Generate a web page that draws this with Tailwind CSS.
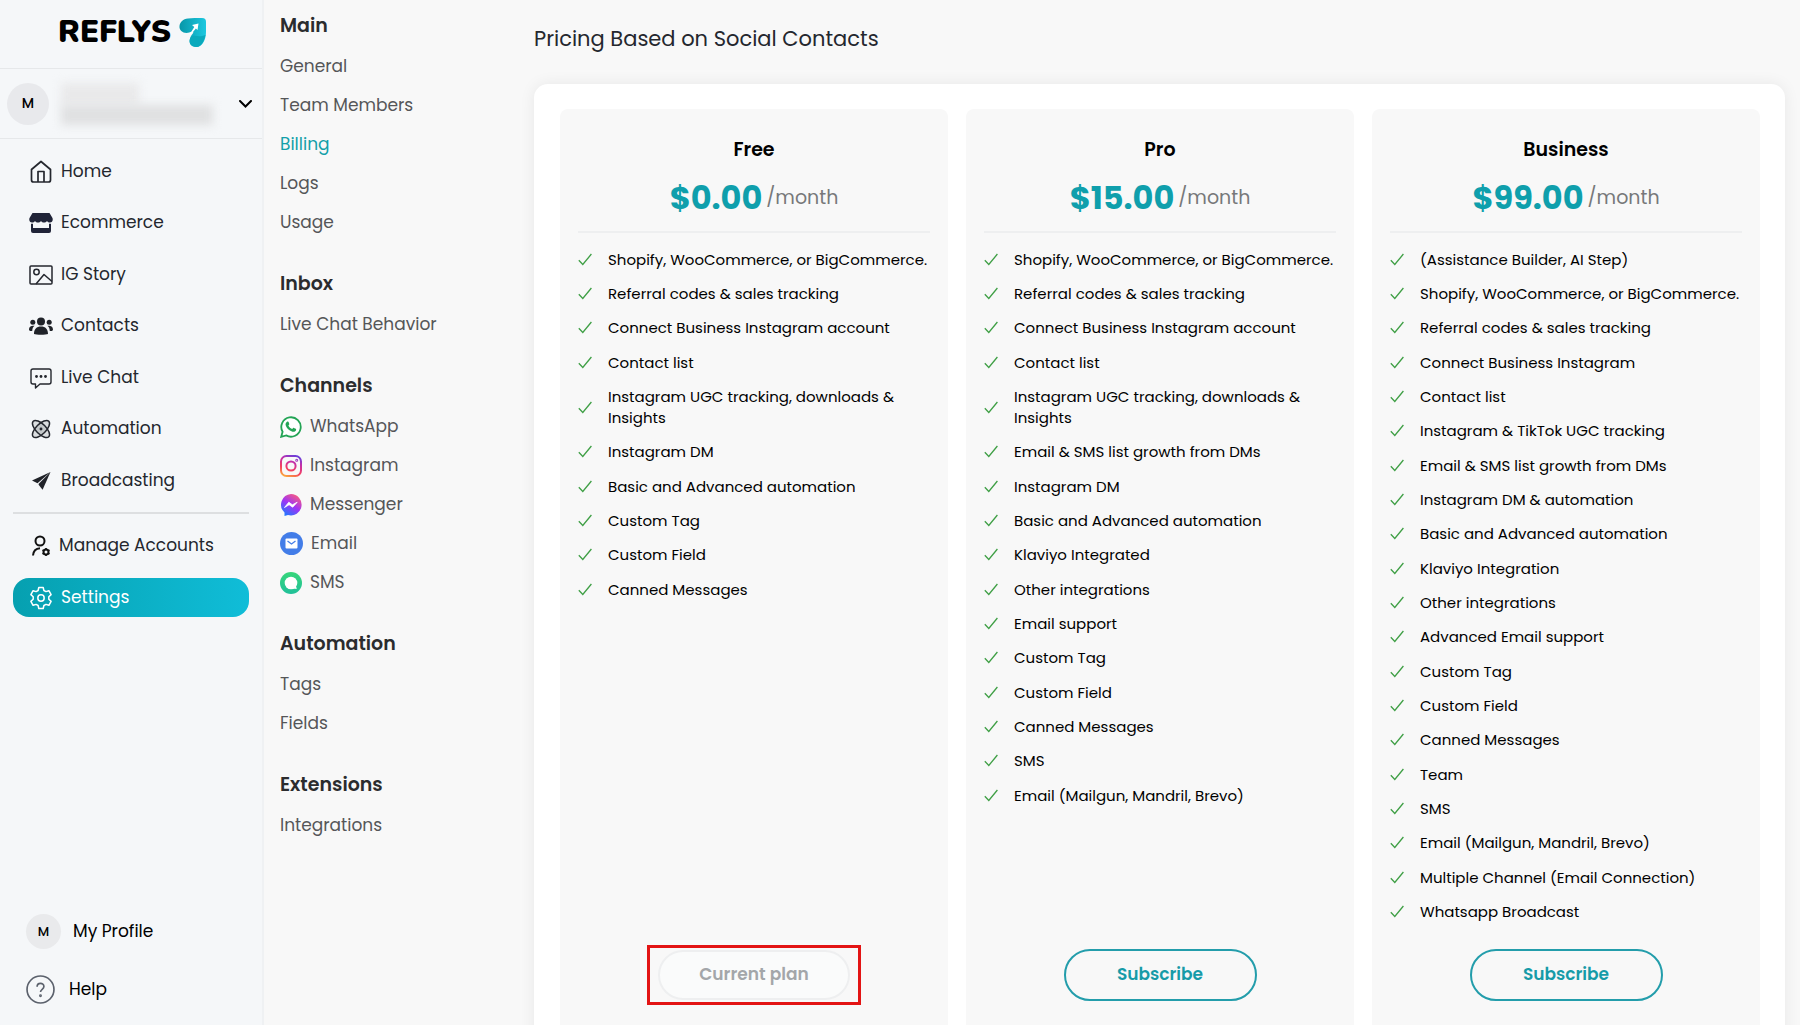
<!DOCTYPE html>
<html lang="en">
<head>
    <meta charset="UTF-8">
    <meta name="viewport" content="width=device-width, initial-scale=1.0">
    <title>Reflys - Billing</title>
    <script src="https://cdn.jsdelivr.net/npm/@tailwindcss/browser@4"></script>
</head>
<body class="bg-[#f8f8f8] font-[Poppins,Inter,sans-serif] text-[#24272e]">
    <!-- Shared icons -->
    <svg class="hidden">
        <symbol id="check" viewBox="0 0 14 13">
            <path d="M.8 7.2l4 4.3L13.4 1" fill="none" stroke="#3f9f45" stroke-width="1.3"/>
        </symbol>
    </svg>

    <div class="flex h-screen overflow-hidden">
        <!-- Sidebar -->
        <aside class="flex w-[264px] shrink-0 flex-col border-r-2 border-[#eff1f3] bg-[#f5f7f9]">
            <a href="#" class="flex h-[69px] items-center gap-2 border-b border-[#e6e8ea] pb-1 pl-[58px]">
                <span class="font-[Nunito,Lato,sans-serif] text-[31px] leading-8 font-black text-black">REFLYS</span>
                <svg class="h-[29px] w-[27px]" viewBox="0 0 27 29">
                    <defs>
                        <linearGradient id="wing" x1="0" y1="0" x2="1" y2="0">
                            <stop offset="0" stop-color="#0796a8"/>
                            <stop offset="1" stop-color="#1cc8e0"/>
                        </linearGradient>
                    </defs>
                    <path d="M9 .500C13 0 18 0 23 0c3 0 4 1.500 4 4v10c0 8-4 15-9.500 15-5 0-8-4-6.500-8.500.8-2.500 2-4 3.500-6-2.500-2-4 .500-7 .500C3.500 15 0 12 .500 8 1 4 4 1 9 .500z" fill="url(#wing)"/>
                    <path d="M12 19c3-3 7 1 14.500-2-1.500 7-4.500 12-9 12-6 0-9-5-5.500-10z" fill="#0aa9bc"/>
                    <path d="M13 7l6.500-1.500L18.500 12l-1.600-1.600L11.500 17l-.8-.7 4.600-7.300z" fill="#fff"/>
                </svg>
            </a>

            <button type="button" aria-label="Switch account" class="flex h-[70px] w-full items-center border-b border-[#e6e8ea] pr-[10px] pl-[7px]">
                <span class="flex size-[42px] items-center justify-center rounded-full bg-[#e8e9ec] text-[14px] font-medium text-black">M</span>
                <span class="ml-3 flex-1">
                    <span class="block h-[22px] w-[78px] bg-[#e9e9ea] blur-[5px]"></span>
                    <span class="block h-[20px] w-[152px] bg-[#dfe0e1] blur-[5px]"></span>
                </span>
                <svg class="h-[8px] w-[13px]" viewBox="0 0 13 8" fill="none" stroke="#000" stroke-width="2" stroke-linecap="round"><path d="M1 1l5.500 5.500L12 1"/></svg>
            </button>

            <nav class="flex flex-1 flex-col px-[13px] pt-[13px]">
                <ul class="flex h-[348px] flex-col justify-between text-[17px]">
                    <li><a href="#" class="flex h-[39px] items-center gap-2 pl-4">
                        <svg class="size-6" viewBox="0 0 24 24" fill="none" stroke="#24272e" stroke-width="1.7" stroke-linejoin="round"><path d="M2.500 9.500L12 1.500l9.500 8V20a2 2 0 0 1-2 2h-15a2 2 0 0 1-2-2z"/><path d="M9 22V11.500h6V22"/></svg>
                        Home</a></li>
                    <li><a href="#" class="flex h-[39px] items-center gap-2 pl-4">
                        <svg class="size-6" viewBox="0 0 24 24" fill="#202438"><path d="M3.500 2h17L23.500 7c.8 2.500-.5 4.500-2.500 4.500-1.300 0-2.200-.5-3-1.500-1.500 2-4.500 2-6 0-1.500 2-4.500 2-6 0-.8 1-1.700 1.500-3 1.500C1 11.500-.300 9.500.500 7z"/><path d="M2 12.800h2V17h16v-4.200h2V20a2 2 0 0 1-2 2H4a2 2 0 0 1-2-2z"/></svg>
                        Ecommerce</a></li>
                    <li><a href="#" class="flex h-[39px] items-center gap-2 pl-4">
                        <svg class="size-6" viewBox="0 0 24 24" fill="none" stroke="#24272e" stroke-width="1.500" stroke-linejoin="round"><rect x="1" y="3" width="22" height="18" rx="1"/><circle cx="7.500" cy="9" r="2.700"/><path d="M7 21l8-9.500 8 7"/></svg>
                        IG Story</a></li>
                    <li><a href="#" class="flex h-[39px] items-center gap-2 pl-4">
                        <svg class="size-6" viewBox="0 0 24 24" fill="#202329"><circle cx="12" cy="7.500" r="4"/><circle cx="3.800" cy="8.300" r="2.500"/><circle cx="20.200" cy="8.300" r="2.500"/><path d="M5 20c0-5 2.500-7.500 7-7.500s7 2.500 7 7.500c-2 1-12 1-14 0zM0 16c0-3 1.600-4.300 5.500-4.200C4 13 3.400 14.500 3.200 17 1.500 17 .5 17 0 16zM24 16c0-3-1.600-4.300-5.500-4.200 1.500 1.200 2.100 2.700 2.300 5.200 1.700 0 2.700 0 3.200-1z"/></svg>
                        Contacts</a></li>
                    <li><a href="#" class="flex h-[39px] items-center gap-2 pl-4">
                        <svg class="size-6" viewBox="0 0 24 24" fill="none" stroke="#24272e" stroke-width="1.400" stroke-linejoin="round"><path d="M4 3h16a2 2 0 0 1 2 2v11a2 2 0 0 1-2 2h-9l-4.500 4v-4H4a2 2 0 0 1-2-2V5a2 2 0 0 1 2-2z"/><g fill="#24272e" stroke="none"><circle cx="7.500" cy="10.500" r="1.400"/><circle cx="12" cy="10.500" r="1.400"/><circle cx="16.500" cy="10.500" r="1.400"/></g></svg>
                        Live Chat</a></li>
                    <li><a href="#" class="flex h-[39px] items-center gap-2 pl-4">
                        <svg class="size-6" viewBox="0 0 24 24" fill="#24272e" fill-opacity=".12" stroke="#24272e" stroke-width="1.500"><ellipse cx="12" cy="12" rx="11" ry="5" transform="rotate(45 12 12)"/><ellipse cx="12" cy="12" rx="11" ry="5" transform="rotate(-45 12 12)"/><circle cx="12" cy="12" r=".7"/></svg>
                        Automation</a></li>
                    <li><a href="#" class="flex h-[39px] items-center gap-2 pl-4">
                        <svg class="size-6" viewBox="0 0 24 24" fill="#202329"><path d="M21.500 3L3 11.500l5.500 2.800z"/><path d="M21.500 3L9.500 15l.3 1 3.800 4.800z"/></svg>
                        Broadcasting</a></li>
                </ul>
                <hr class="my-3 border-t-2 border-[#dddfe1]">
                <ul class="flex flex-col gap-[13px] text-[17px]">
                    <li><a href="#" class="flex h-[39px] items-center gap-[6px] pl-4">
                        <svg class="size-6" viewBox="0 0 24 24" fill="none" stroke="#111" stroke-width="2"><circle cx="11" cy="7" r="4.500"/><path d="M4 21.500c.3-4 2.500-7 7-7.300"/><circle cx="17" cy="18" r="2.500"/><path stroke-width="1.700" d="M17 14v2M17 20v2M13.500 16l1.700 1M18.800 19l1.700 1M13.500 20l1.700-1M18.800 17l1.700-1"/></svg>
                        Manage Accounts</a></li>
                    <li><a href="#" class="flex h-[39px] items-center gap-2 rounded-[16px] bg-linear-to-r from-[#06a0b0] to-[#10bdd8] pl-4 text-white">
                        <svg class="size-6" viewBox="0 0 24 24" fill="none" stroke="#fff" stroke-width="1.500" stroke-linejoin="round"><circle cx="12" cy="12" r="3.200"/><path d="M9.800 1.500h4.400l.7 3 2 1.100 3-.9 2.200 3.900-2.300 2.100v2.600l2.300 2.100-2.200 3.900-3-.9-2 1.100-.7 3H9.800l-.7-3-2-1.100-3 .9-2.200-3.900 2.300-2.100v-2.600L1.900 8.600l2.200-3.900 3 .9 2-1.100z"/></svg>
                        Settings</a></li>
                </ul>
            </nav>

            <ul class="flex flex-col gap-[21px] pb-[17px] pl-[26px] text-[17px] text-black">
                <li><a href="#" class="flex h-[37px] items-center gap-3">
                    <span class="flex size-[35px] items-center justify-center rounded-full bg-[#e9eaec] text-[13px] font-medium">M</span>
                    My Profile</a></li>
                <li><a href="#" class="flex h-[37px] items-center gap-[14px]">
                    <svg class="size-[29px]" viewBox="0 0 28 28" fill="none" stroke="#5b616c" stroke-width="1.600"><circle cx="14" cy="14" r="13"/><path d="M10.700 11.300c0-4.300 6.600-4.300 6.600-.2 0 2.700-3.300 2.700-3.300 5.400"/><circle cx="14" cy="20" r=".6"/></svg>
                    Help</a></li>
            </ul>
        </aside>

        <!-- Settings menu -->
        <nav class="w-[270px] shrink-0 pt-[5px] pl-4 text-[17px] text-[#555658]">
            <section class="mb-[21px]">
                <h2 class="flex h-[42px] items-center text-[19px] font-semibold text-[#2b2c2e]">Main</h2>
                <a href="#" class="flex h-[39px] items-center">General</a>
                <a href="#" class="flex h-[39px] items-center">Team Members</a>
                <a href="#" class="flex h-[39px] items-center text-[#129fa9]">Billing</a>
                <a href="#" class="flex h-[39px] items-center">Logs</a>
                <a href="#" class="flex h-[39px] items-center">Usage</a>
            </section>
            <section class="mb-[21px]">
                <h2 class="flex h-[42px] items-center text-[19px] font-semibold text-[#2b2c2e]">Inbox</h2>
                <a href="#" class="flex h-[39px] items-center">Live Chat Behavior</a>
            </section>
            <section class="mb-[21px]">
                <h2 class="flex h-[42px] items-center text-[19px] font-semibold text-[#2b2c2e]">Channels</h2>
                <a href="#" class="flex h-[39px] items-center gap-2">
                    <svg class="size-[22px]" viewBox="0 0 22 22"><path d="M1.200 20.800l1.400-5A9.700 9.700 0 1 1 6.200 19.400z" fill="#fff" stroke="#23a455" stroke-width="1.800"/><path d="M7.300 5.600c.8-.4 1.200 0 1.500.9l.5 1.400c.1.600-.7 1.200-.9 1.500.8 1.800 2.200 2.900 3.900 3.600.5-.5 1-1.400 1.600-1.100l1.800.9c.6.300.5 1 .2 1.700-.5 1-2 1.600-3.400 1.200-3.700-1-6.300-3.900-6.900-6.700-.2-1.300.5-2.700 1.700-3.400z" fill="#23a455"/></svg>
                    WhatsApp</a>
                <a href="#" class="flex h-[39px] items-center gap-2">
                    <svg class="size-[22px]" viewBox="0 0 22 22" fill="none" stroke="url(#insta)" stroke-width="2">
                        <defs><linearGradient id="insta" gradientUnits="userSpaceOnUse" x1="5" y1="22" x2="14" y2="0"><stop offset="0" stop-color="#fbb03b"/><stop offset=".35" stop-color="#f4415f"/><stop offset=".7" stop-color="#c62fa8"/><stop offset="1" stop-color="#6b3fd9"/></linearGradient></defs>
                        <rect x="1" y="1" width="20" height="20" rx="5.500"/><circle cx="11" cy="11" r="4.600"/><circle cx="16.700" cy="5.300" r=".5"/></svg>
                    Instagram</a>
                <a href="#" class="flex h-[39px] items-center gap-2">
                    <svg class="size-[22px]" viewBox="0 0 22 22">
                        <defs><linearGradient id="msgr" x1=".2" y1="1" x2=".8" y2="0"><stop offset="0" stop-color="#1a7cff"/><stop offset=".5" stop-color="#a033f5"/><stop offset="1" stop-color="#ff5f78"/></linearGradient></defs>
                        <path d="M11 0a10.700 10.700 0 1 1-3 21l-3.500 1v-3.500A10.700 10.700 0 0 1 11 0z" fill="url(#msgr)"/><path d="M4.500 13.500l4.300-5.300 3.600 2.600 4.800-2.600-4.500 5-3.600-2.500z" fill="#fff" stroke="#fff" stroke-width=".8" stroke-linejoin="round"/></svg>
                    Messenger</a>
                <a href="#" class="flex h-[39px] items-center gap-2">
                    <svg class="size-[23px]" viewBox="0 0 23 23"><circle cx="11.500" cy="11.500" r="11.500" fill="#437de8"/><rect x="5.500" y="6.500" width="12" height="10" rx="1" fill="#fff"/><path d="M7.500 9l4 3 4-3" fill="none" stroke="#437de8" stroke-width="1.300"/></svg>
                    Email</a>
                <a href="#" class="flex h-[39px] items-center gap-2">
                    <svg class="size-[22px]" viewBox="0 0 22 22">
                        <defs><linearGradient id="sms" x1="0" y1="0" x2="0" y2="1"><stop offset="0" stop-color="#37d67a"/><stop offset="1" stop-color="#21c09a"/></linearGradient></defs>
                        <circle cx="11" cy="11" r="11" fill="url(#sms)"/><circle cx="11" cy="11" r="6.300" fill="#fff"/><path d="M13 16.500l3.800.600-1-3.500z" fill="#fff"/></svg>
                    SMS</a>
            </section>
            <section class="mb-[21px]">
                <h2 class="flex h-[42px] items-center text-[19px] font-semibold text-[#2b2c2e]">Automation</h2>
                <a href="#" class="flex h-[39px] items-center">Tags</a>
                <a href="#" class="flex h-[39px] items-center">Fields</a>
            </section>
            <section class="mb-[21px]">
                <h2 class="flex h-[42px] items-center text-[19px] font-semibold text-[#2b2c2e]">Extensions</h2>
                <a href="#" class="flex h-[39px] items-center">Integrations</a>
            </section>
        </nav>

        <!-- Pricing -->
        <main class="flex min-w-0 flex-1 flex-col pt-[21px] pr-[15px]">
            <h1 class="mb-[27px] text-[21px] leading-9">Pricing Based on Social Contacts</h1>
            <div class="grid grid-cols-3 gap-[18px] rounded-[14px] bg-white p-[25px] pl-[26px] shadow-[0_0_16px_rgba(0,0,0,0.07)]">
                <section class="flex flex-col items-center rounded-lg bg-[#f8f8f8] px-[18px] pt-7 pb-10 text-black">
                    <h2 class="text-[19px] leading-[26px] font-semibold">Free</h2>
                    <p class="mt-3 flex items-center gap-1 leading-[46px]"><span class="text-[32px] font-bold text-[#0f9fac]">$0.00</span><span class="text-[19px] text-[#77787a]">/month</span></p>
                    <hr class="mt-[10px] mb-4 w-full border-t-2 border-[#eeeff0]">
                    <ul id="freeFeatures" class="w-full flex-1 text-[15px] leading-[21px]"></ul>
                    <div class="mt-[10px] border-3 border-[#e31414] px-2 py-[2px]">
                        <button type="button" disabled class="h-[50px] w-[192px] rounded-full border-2 border-[#eeeff0] bg-[#fafbfb] text-[17px] font-semibold text-[#a3a6a9]">Current plan</button>
                    </div>
                </section>
                <section class="flex flex-col items-center rounded-lg bg-[#f8f8f8] px-[18px] pt-7 pb-10 text-black">
                    <h2 class="text-[19px] leading-[26px] font-semibold">Pro</h2>
                    <p class="mt-3 flex items-center gap-1 leading-[46px]"><span class="text-[32px] font-bold text-[#0f9fac]">$15.00</span><span class="text-[19px] text-[#77787a]">/month</span></p>
                    <hr class="mt-[10px] mb-4 w-full border-t-2 border-[#eeeff0]">
                    <ul id="proFeatures" class="w-full flex-1 text-[15px] leading-[21px]"></ul>
                    <div class="mt-[10px] py-[4px]">
                        <button type="button" class="h-[52px] w-[193px] rounded-full border-2 border-[#239dab] text-[17px] font-semibold text-[#169ba8]">Subscribe</button>
                    </div>
                </section>
                <section class="flex flex-col items-center rounded-lg bg-[#f8f8f8] px-[18px] pt-7 pb-10 text-black">
                    <h2 class="text-[19px] leading-[26px] font-semibold">Business</h2>
                    <p class="mt-3 flex items-center gap-1 leading-[46px]"><span class="text-[32px] font-bold text-[#0f9fac]">$99.00</span><span class="text-[19px] text-[#77787a]">/month</span></p>
                    <hr class="mt-[10px] mb-4 w-full border-t-2 border-[#eeeff0]">
                    <ul id="businessFeatures" class="w-full flex-1 text-[15px] leading-[21px]"></ul>
                    <div class="mt-[10px] py-[4px]">
                        <button type="button" class="h-[52px] w-[193px] rounded-full border-2 border-[#239dab] text-[17px] font-semibold text-[#169ba8]">Subscribe</button>
                    </div>
                </section>
            </div>
        </main>
    </div>

    <script>
        const features = {
            freeFeatures: [
                'Shopify, WooCommerce, or BigCommerce.', 'Referral codes & sales tracking',
                'Connect Business Instagram account', 'Contact list',
                'Instagram UGC tracking, downloads & Insights', 'Instagram DM',
                'Basic and Advanced automation', 'Custom Tag', 'Custom Field', 'Canned Messages'
            ],
            proFeatures: [
                'Shopify, WooCommerce, or BigCommerce.', 'Referral codes & sales tracking',
                'Connect Business Instagram account', 'Contact list',
                'Instagram UGC tracking, downloads & Insights', 'Email & SMS list growth from DMs',
                'Instagram DM', 'Basic and Advanced automation', 'Klaviyo Integrated',
                'Other integrations', 'Email support', 'Custom Tag', 'Custom Field',
                'Canned Messages', 'SMS', 'Email (Mailgun, Mandril, Brevo)'
            ],
            businessFeatures: [
                '(Assistance Builder, AI Step)', 'Shopify, WooCommerce, or BigCommerce.',
                'Referral codes & sales tracking', 'Connect Business Instagram', 'Contact list',
                'Instagram & TikTok UGC tracking', 'Email & SMS list growth from DMs',
                'Instagram DM & automation', 'Basic and Advanced automation', 'Klaviyo Integration',
                'Other integrations', 'Advanced Email support', 'Custom Tag', 'Custom Field',
                'Canned Messages', 'Team', 'SMS', 'Email (Mailgun, Mandril, Brevo)',
                'Multiple Channel (Email Connection)', 'Whatsapp Broadcast'
            ]
        };

        Object.entries(features).forEach(([id, items]) => {
            document.getElementById(id).innerHTML = items.map(text => `
                <li class="mb-[13px] flex items-center gap-4 nth-[3n]:mb-[14px]">
                    <svg class="h-[13px] w-[14px] shrink-0"><use href="#check"/></svg>
                    <span>${text.replace(/&/g, '&amp;')}</span>
                </li>`).join('');
        });
    </script>
</body>
</html>
